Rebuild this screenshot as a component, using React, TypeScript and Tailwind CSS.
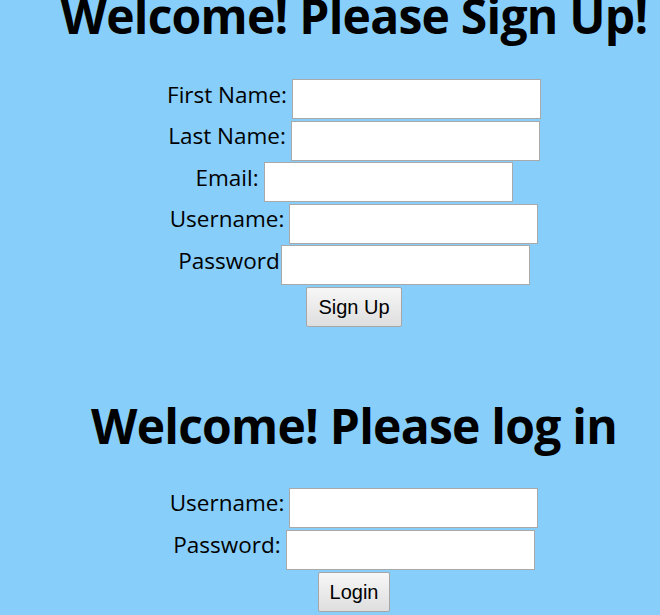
import React from "react";

const font = { fontFamily: '"Open Sans", "Noto Sans", sans-serif' };

function Row({ label, width = "w-[249px]", gap = "mr-[5px]" }: { label: string; width?: string; gap?: string }) {
  return (
    <div className="flex items-center justify-center h-[40px]">
      <span className={`text-[22.5px] leading-none text-black ${gap} relative top-[-4px]`}>{label}</span>
      <input className={`${width} h-[40px] bg-white border border-[#a9a9a9] outline-none`} />
    </div>
  );
}

function Btn({ children }: { children: React.ReactNode }) {
  return (
    <button
      className="h-[40px] px-[11px] border border-[#a6a6a6] rounded-[2px] bg-gradient-to-b from-[#f7f7f7] to-[#dedede] text-[20px] text-black leading-none"
      style={{ fontFamily: '"Liberation Sans", Arial, sans-serif' }}
    >
      {children}
    </button>
  );
}

export default function App() {
  return (
    <div className="w-[660px] h-[615px] overflow-hidden bg-[#87cefa] pl-[48px]" style={font}>
      <h1 className="text-center font-bold text-[48px] leading-none text-black mt-[-8px] tracking-[-0.75px] whitespace-nowrap">
        Welcome! Please Sign Up!
      </h1>
      <div className="flex flex-col items-center gap-[1.5px] mt-[39px]">
        <Row label="First Name:" />
        <Row label="Last Name:" />
        <Row label="Email:" />
        <Row label="Username:" />
        <Row label="Password" gap="mr-[1px]" />
        <Btn>Sign Up</Btn>
      </div>
      <h1 className="text-center font-bold text-[48px] leading-none text-black mt-[75px] tracking-[-0.75px] whitespace-nowrap">
        Welcome! Please log in
      </h1>
      <div className="flex flex-col items-center gap-[2px] mt-[38px]">
        <Row label="Username:" />
        <Row label="Password:" />
        <Btn>Login</Btn>
      </div>
    </div>
  );
}
